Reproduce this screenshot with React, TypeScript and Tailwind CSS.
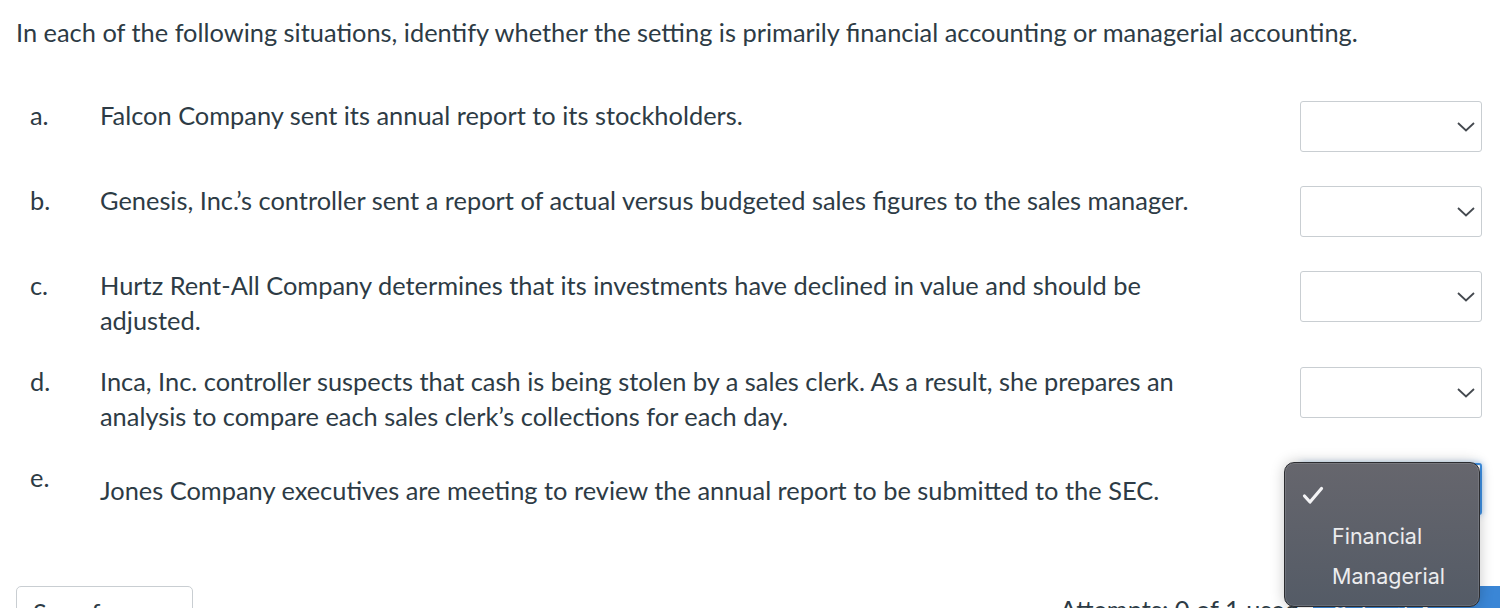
import React from 'react';

interface Situation {
  label: string;
  text: string;
}

const SITUATIONS: Situation[] = [
  { label: 'a.', text: 'Falcon Company sent its annual report to its stockholders.' },
  {
    label: 'b.',
    text: 'Genesis, Inc.’s controller sent a report of actual versus budgeted sales figures to the sales manager.',
  },
  {
    label: 'c.',
    text: 'Hurtz Rent-All Company determines that its investments have declined in value and should be adjusted.',
  },
  {
    label: 'd.',
    text: 'Inca, Inc. controller suspects that cash is being stolen by a sales clerk. As a result, she prepares an analysis to compare each sales clerk’s collections for each day.',
  },
];

function Chevron() {
  return (
    <svg width="18" height="10" viewBox="0 0 18 10" fill="none">
      <polyline points="1,1 9,8.5 17,1" stroke="#44494f" strokeWidth="1.8" />
    </svg>
  );
}

function SelectBox({ focused }: { focused?: boolean }) {
  return (
    <div
      className={
        focused
          ? 'mt-[3px] mb-[5px] flex h-[52px] w-[182px] shrink-0 items-center justify-end rounded-[3px] border-2 border-[#3d8ee0] bg-white pr-[6px] shadow-[0_0_6px_rgba(61,142,224,0.5)]'
          : 'mt-[3px] mb-[5px] flex h-[51px] w-[182px] shrink-0 items-center justify-end rounded-[3px] border border-[#c9ced2] bg-white pr-[6px]'
      }
    >
      <Chevron />
    </div>
  );
}

export default function App() {
  return (
    <div className="relative h-[608px] w-[1500px] overflow-hidden bg-white font-['Lato',sans-serif] text-[25.4px] leading-[35px] text-[#2d3b45]">
      <div className="pl-4 pr-[18px] pt-[15px]">
        <p>
          In each of the following situations, identify whether the setting is primarily financial accounting or
          managerial accounting.
        </p>

        <div className="mt-[48px] flex flex-col gap-[26px]">
          {SITUATIONS.map((s) => (
            <div key={s.label} className="flex items-start">
              <span className="w-[84px] shrink-0 pl-[14px]">{s.label}</span>
              <p className="w-[1100px] shrink-0">{s.text}</p>
              <div className="ml-auto">
                <SelectBox />
              </div>
            </div>
          ))}

          {/* last row: text centered on the select */}
          <div className="flex items-start">
            <span className="w-[84px] shrink-0 pl-[14px]">e.</span>
            <div className="flex flex-1 items-center">
              <p className="w-[1100px] shrink-0">
                Jones Company executives are meeting to review the annual report to be submitted to the SEC.
              </p>
              <div className="ml-auto">
                <SelectBox focused />
              </div>
            </div>
          </div>
        </div>

        {/* footer */}
        <div className="mt-[66px] flex items-start">
          <button className="h-[46px] w-[177px] rounded-[5px] border border-[#c9ced2] bg-white px-4 pt-[8px] text-left text-[25.4px] leading-[35px] text-[#2d3b45]">
            Save for Later
          </button>
          <div className="ml-auto flex items-start">
            <span className="pt-[6px]">Attempts: 0 of 1 used</span>
            <button className="ml-[14px] mr-[-60px] h-[46px] w-[229px] rounded-[5px] bg-[#3a86d6] px-5 pt-[8px] text-left text-white">
              Submit Answer
            </button>
          </div>
        </div>
      </div>

      {/* native select popup */}
      <div className="absolute left-[1284px] top-[462px] flex h-[145px] w-[196px] flex-col rounded-[10px] border border-[#2b2c30] bg-gradient-to-b from-[#66666d] to-[#545b66] font-['Inter',sans-serif] text-[21.5px] leading-[40px] text-[#ececee] shadow-[0_0_14px_rgba(0,0,0,0.22),inset_0_0_0_1px_rgba(255,255,255,0.12)]">
        <div className="flex h-[40px] items-center pl-[17px] pt-[24px]">
          <svg width="22" height="19" viewBox="0 0 22 19" fill="none">
            <polyline
              points="2.5,10 8,16 19.5,2.5"
              stroke="#f4f4f6"
              strokeWidth="3.2"
              strokeLinecap="round"
              strokeLinejoin="round"
            />
          </svg>
        </div>
        <div className="mt-[13px] pl-[47px]">Financial</div>
        <div className="pl-[47px]">Managerial</div>
      </div>
    </div>
  );
}
